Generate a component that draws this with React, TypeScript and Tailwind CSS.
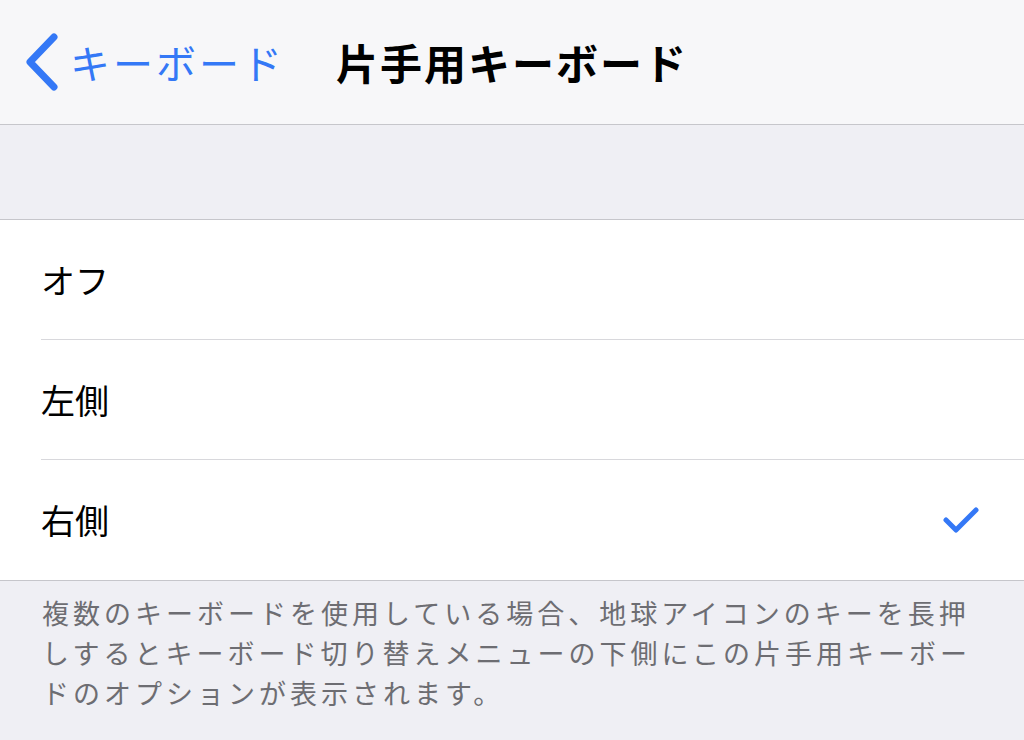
import React from 'react';

const ROWS = [
  { id: 'off', label: 'オフ', checked: false },
  { id: 'left', label: '左側', checked: false },
  { id: 'right', label: '右側', checked: true },
];

const FONT = "font-['Noto_Sans_CJK_JP','Noto_Sans',sans-serif]";

const App: React.FC = () => {
  return (
    <div className={`w-[1024px] h-[740px] overflow-hidden bg-[#efeff4] ${FONT}`}>
      {/* nav bar */}
      <div className="relative h-[125px] bg-[#f7f7f9] border-b border-[#c6c6cb] flex items-center">
        <div className="flex items-center pl-[24px] text-[#3478f6]">
          <svg width="36" height="58" viewBox="0 0 36 58" fill="none">
            <path d="M30 4 L6 29 L30 54" stroke="#3478f6" strokeWidth="7" strokeLinecap="round" strokeLinejoin="round" />
          </svg>
          <span className="ml-[10px] text-[40px] leading-none tracking-[3px]">キーボード</span>
        </div>
        <div className="absolute left-0 right-0 top-0 bottom-0 flex items-center justify-center pointer-events-none">
          <span className="text-[42px] font-bold leading-none text-black tracking-[2px]">片手用キーボード</span>
        </div>
      </div>

      {/* section spacer */}
      <div className="h-[95px] border-b border-[#c6c6cb]" />

      {/* rows */}
      <div className="bg-white border-b border-[#c6c6cb]">
        {ROWS.map((row, idx) => (
          <div key={row.id} className="pl-[41px]">
            <div
              className={`h-[120px] flex items-center justify-between pr-[44px] ${
                idx < ROWS.length - 1 ? 'border-b border-[#d8d8dc]' : ''
              }`}
            >
              <span className="text-[34px] text-black leading-none">{row.label}</span>
              {row.checked && (
                <svg width="38" height="30" viewBox="0 0 38 30" fill="none">
                  <path d="M4 15 L14 25 L34 5" stroke="#3478f6" strokeWidth="5" strokeLinecap="round" strokeLinejoin="round" />
                </svg>
              )}
            </div>
          </div>
        ))}
      </div>

      {/* footer */}
      <p className="pl-[42px] pr-[40px] pt-[12px] text-[27px] leading-[40px] text-[#6d6d72] tracking-[4px]">
        複数のキーボードを使用している場合、地球アイコンのキーを長押しするとキーボード切り替えメニューの下側にこの片手用キーボードのオプションが表示されます。
      </p>
    </div>
  );
};

export default App;
